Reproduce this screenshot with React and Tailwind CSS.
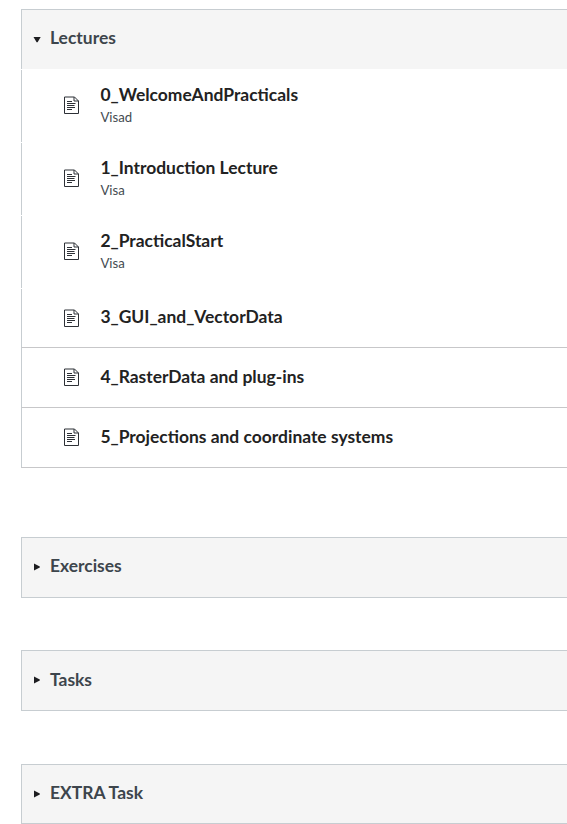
function DocumentIcon() {
  return (
    <svg className="h-[18px] w-[15px] shrink-0" viewBox="0 0 15 18" fill="none" stroke="#2d3036">
      <path d="M.5 1H10.5L14.5 5V17.5H.5Z" />
      <path d="M10 1V5H14.5" />
      <path d="M3 5.5H8M3 7.5H11.5M3 9.5H10.5M3 11.5H11M3 13.5H8" strokeWidth="1" />
    </svg>
  );
}

function Arrow({ open }) {
  return (
    <svg className="h-[10px] w-[10px] shrink-0" viewBox="0 0 10 10" fill="#1d1d20">
      <path d={open ? "M1.5 3H8.7L5.6 8.3H4.6Z" : "M2 1.5L7.8 4.5V5.5L2 8.5Z"} />
    </svg>
  );
}

function Header({ title, open, className = "", titleClassName = "mb-[2px]" }) {
  return (
    <div className={`flex items-center border-l border-t border-[#c7cdd1] bg-[#f5f5f5] pl-[10px] ${className}`}>
      <Arrow open={open} />
      <h2 className={`ml-[8px] text-[17.45px] leading-6 font-bold text-[#3d454c] ${titleClassName}`}>{title}</h2>
    </div>
  );
}

function Item({ title, status, className, textClassName = "" }) {
  return (
    <li className={`flex items-center border-l border-l-[#c7cdd1] pl-[42px] ${className}`}>
      <DocumentIcon />
      <div className={`ml-[21.4px] ${textClassName}`}>
        <div className="text-[17.45px] leading-6 font-bold">{title}</div>
        {status && <div className="text-[13.2px] leading-5 text-[#444b51]">{status}</div>}
      </div>
    </li>
  );
}

export default function App() {
  return (
    <main className="h-[824px] w-full overflow-hidden bg-white pt-[9px] pl-[21px] font-['Lato',sans-serif] text-[#222222]">
      <section>
        <Header title="Lectures" open className="h-[60px] pb-px" />
        <ul>
          <Item title="0_WelcomeAndPracticals" status="Visad" className="mt-px h-[72px] pb-[2px]" textClassName="mb-px" />
          <Item title="1_Introduction Lecture" status="Visa" className="mt-px h-[72px] pb-[2px]" textClassName="mb-px" />
          <Item title="2_PracticalStart" status="Visa" className="mt-px h-[72px] pb-[2px]" textClassName="mb-px" />
          <Item title="3_GUI_and_VectorData" className="mt-px h-[59px] border-b border-b-[#c7c7c9]" textClassName="mb-[2px]" />
          <Item title="4_RasterData and plug-ins" className="h-[60px] border-b border-b-[#c7c7c9] pb-px" />
          <Item title="5_Projections and coordinate systems" className="h-[60px] border-b border-b-[#c7c7c9] pb-px" />
        </ul>
      </section>
      <Header title="Exercises" className="mt-[69px] h-[61px] border-b pb-px" />
      <Header title="Tasks" className="mt-[52px] h-[61px] border-b pb-px" titleClassName="" />
      <Header title="EXTRA Task" className="mt-[53px] h-[60px] border-b pb-px" titleClassName="mb-px" />
    </main>
  );
}
